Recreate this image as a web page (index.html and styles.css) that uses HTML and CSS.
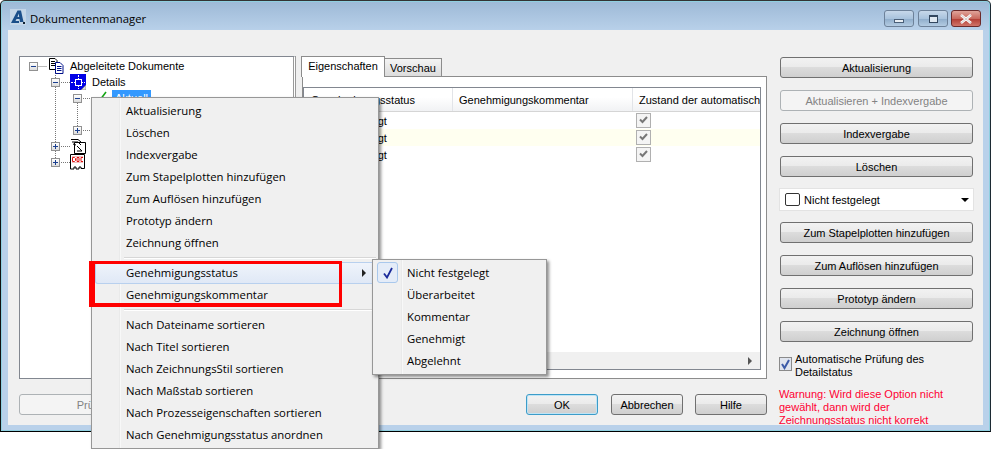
FILE: index.html
```html
<!DOCTYPE html>
<html lang="de">
<head>
<meta charset="utf-8">
<title>Dokumentenmanager</title>
<link rel="stylesheet" href="styles.css">
</head>
<body>
<div class="window">
  <header class="titlebar">
    <svg class="app-icon" width="16" height="16" viewBox="0 0 16 16"><rect width="16" height="16" fill="#c4d6e8"/><path d="M1 14 L7.5 1.5 H11 L13.5 13 H10 L9.5 10 H6.5 L5.5 12 L9 12 L9 14 Z M7.5 8 H9.2 L8.7 4.5 Z" fill="#1b4f8a" fill-rule="evenodd"/><rect x="13" y="13" width="2" height="2" fill="#123"/></svg>
    <span class="title">Dokumentenmanager</span>
    <div class="caption">
      <div class="cap cap-min"><i></i></div>
      <div class="cap cap-max"><i></i></div>
      <div class="cap cap-close"><svg width="14" height="10" viewBox="0 0 14 10"><path d="M2 1 L12 9 M12 1 L2 9" stroke="#fff" stroke-width="2.6"/><path d="M2 1 L12 9 M12 1 L2 9" stroke="#6b5a5a" stroke-width=".7" opacity=".45"/></svg></div>
    </div>
  </header>
  <main class="client">
    <section class="left">
      <div class="top">
        <div class="tree">
          <svg class="tree-lines" width="80" height="120"><path d="M18.5 9.5 H27 M35.5 10 V107 M41 25.5 H50 M41 89.5 H50 M41 105.5 H50 M57.5 42 V74 M63 41.5 H72 M63 73.5 H72" stroke="#777" stroke-dasharray="1 1" fill="none"/></svg>
          <div class="row lvl0"><b class="exp minus"></b>
            <svg class="ico" width="16" height="16" viewBox="0 0 16 16"><path d="M1.5 .5 H7 L9 2.5 V11.5 H1.5 Z" fill="#fff" stroke="#000"/><path d="M3 3.5 H7 M3 5.5 H7 M3 7.5 H7" stroke="#000"/><path d="M7.5 4.5 H12 L15 7.5 V15.5 H7.5 Z" fill="#fff" stroke="#00108a"/><path d="M9 8.5 H13.5 M9 10.5 H13.5 M9 12.5 H13.5" stroke="#00108a"/></svg>
            <span class="label">Abgeleitete Dokumente</span></div>
          <div class="row lvl1"><b class="exp minus"></b>
            <svg class="ico" width="16" height="16" viewBox="0 0 16 16"><rect width="16" height="16" fill="#0000e6"/><path d="M1 8.5 H5 M11 8.5 H15 M8.5 1 V5 M8.5 11 V15" stroke="#fff" stroke-dasharray="2 1"/><rect x="5.5" y="5.5" width="6" height="6" fill="none" stroke="#fff"/><path d="M11 16 L16 11 V16 Z" fill="#ddd" stroke="#777" stroke-width=".6"/></svg>
            <span class="label">Details</span></div>
          <div class="row lvl2"><b class="exp minus"></b>
            <svg class="ico-check" width="10" height="10" viewBox="0 0 10 10"><path d="M2 9 L8 1" stroke="#12a512" stroke-width="1.6"/><path d="M1 7 L2.5 9.5" stroke="#111" stroke-width="1.3"/></svg>
            <span class="label sel">Aktuell</span></div>
          <div class="row lvl2 blank"></div>
          <div class="row lvl2"><b class="exp plus"></b></div>
          <div class="row lvl1"><b class="exp plus"></b>
            <svg class="ico" width="16" height="16" viewBox="0 0 16 16"><path d="M4.5 4.5 H15.5 V15.5 H4.5 Z" fill="#fff" stroke="#000"/><path d="M1 1.5 H8 L11 4 M2 4 H8 L11 7 M7 8 L12 13 M7 13 H12 M3 6 L6 7" stroke="#000" fill="none"/></svg>
          </div>
          <div class="row lvl1"><b class="exp plus"></b>
            <svg class="ico" width="16" height="16" viewBox="0 0 16 16"><path d="M.5 .5 H14.5 V14.5 H11 V13 H9 V15 H6 V13 H4 V15 H.5 Z" fill="#fff" stroke="#000"/><path d="M2 2.5 H13 M2 8.5 H13" stroke="#f0c0c0"/><path d="M2.5 3.5 h2 l1 1 v2 l-1 1 h-2 z M7 3.5 h2 v4 h-2 z M13 3.5 h-2 v4 h2" fill="none" stroke="#e01010"/></svg>
          </div>
        </div>
        <div class="tabs">
          <div class="tabstrip">
            <div class="tab active">Eigenschaften</div>
            <div class="tab">Vorschau</div>
          </div>
          <div class="panel">
            <div class="grid">
              <div class="grid-head">
                <div class="col c1">Genehmigungsstatus</div>
                <div class="col c2">Genehmigungskommentar</div>
                <div class="col c3">Zustand der automatischen Prüfung</div>
              </div>
              <div class="grid-row"><div class="col c1">Nicht festgelegt</div><div class="col c2"></div><div class="col c3"><span class="grid-check"><svg width="13" height="13" viewBox="0 0 13 13"><path d="M3 5.5 L5.5 8 L10 3" stroke="#777" stroke-width="2" fill="none"/></svg></span></div></div>
              <div class="grid-row alt"><div class="col c1">Nicht festgelegt</div><div class="col c2"></div><div class="col c3"><span class="grid-check"><svg width="13" height="13" viewBox="0 0 13 13"><path d="M3 5.5 L5.5 8 L10 3" stroke="#777" stroke-width="2" fill="none"/></svg></span></div></div>
              <div class="grid-row"><div class="col c1">Nicht festgelegt</div><div class="col c2"></div><div class="col c3"><span class="grid-check"><svg width="13" height="13" viewBox="0 0 13 13"><path d="M3 5.5 L5.5 8 L10 3" stroke="#777" stroke-width="2" fill="none"/></svg></span></div></div>
              <div class="grid-scroll"><i class="arrow-right"></i></div>
            </div>
          </div>
        </div>
      </div>
      <div class="bottom">
        <button class="btn wide disabled">Prüfen</button>
        <span class="spacer"></span>
        <button class="btn foot default">OK</button>
        <button class="btn foot">Abbrechen</button>
        <button class="btn foot">Hilfe</button>
      </div>
    </section>
    <aside class="side">
      <button class="btn">Aktualisierung</button>
      <button class="btn disabled">Aktualisieren + Indexvergabe</button>
      <button class="btn">Indexvergabe</button>
      <button class="btn">Löschen</button>
      <div class="combo"><span class="swatch"></span><span class="combo-text">Nicht festgelegt</span><i class="arrow-down"></i></div>
      <button class="btn">Zum Stapelplotten hinzufügen</button>
      <button class="btn">Zum Auflösen hinzufügen</button>
      <button class="btn">Prototyp ändern</button>
      <button class="btn">Zeichnung öffnen</button>
      <div class="auto"><span class="auto-box"><svg width="11" height="12" viewBox="0 0 11 12"><path d="M2 6 L4.5 10 L9 2" stroke="#3b5aa8" stroke-width="2" fill="none"/></svg></span><span>Automatische Prüfung des Detailstatus</span></div>
      <p class="warn">Warnung: Wird diese Option nicht gewählt, dann wird der Zeichnungsstatus nicht korrekt</p>
    </aside>
  </main>

  <nav class="menu ctx">
    <div class="item">Aktualisierung</div>
    <div class="item">Löschen</div>
    <div class="item">Indexvergabe</div>
    <div class="item">Zum Stapelplotten hinzufügen</div>
    <div class="item">Zum Auflösen hinzufügen</div>
    <div class="item">Prototyp ändern</div>
    <div class="item">Zeichnung öffnen</div>
    <div class="sep"></div>
    <div class="item hot">Genehmigungsstatus<i class="arrow-right dark"></i></div>
    <div class="item">Genehmigungskommentar</div>
    <div class="sep"></div>
    <div class="item">Nach Dateiname sortieren</div>
    <div class="item">Nach Titel sortieren</div>
    <div class="item">Nach ZeichnungsStil sortieren</div>
    <div class="item">Nach Maßstab sortieren</div>
    <div class="item">Nach Prozesseigenschaften sortieren</div>
    <div class="item">Nach Genehmigungsstatus anordnen</div>
    <div class="redbox"></div>
  </nav>
  <nav class="menu sub">
    <div class="item checked"><span class="tick"><svg width="12" height="12" viewBox="0 0 12 12"><path d="M2 6.5 L5 10.5 L10 1" stroke="#1a2a9a" stroke-width="1.8" fill="none"/></svg></span>Nicht festgelegt</div>
    <div class="item">Überarbeitet</div>
    <div class="item">Kommentar</div>
    <div class="item">Genehmigt</div>
    <div class="item">Abgelehnt</div>
  </nav>
</div>
</body>
</html>
```
FILE: styles.css
```css
* { box-sizing: border-box; }
html, body { margin: 0; height: 449px; overflow: hidden; background: #fff; }
body { font: 11.33px "Open Sans", "Liberation Sans", sans-serif; color: #000; }
.window {
  position: relative; width: 991px; height: 432px;
  display: flex; flex-direction: column;
  padding: 0 7px 6px 7px;
  background: linear-gradient(#9db9d6, #b9d1ea 30px);
  border: 1px solid #1c2a33; border-top-color: #333; border-left-color: #111; border-radius: 5px 5px 0 0;
  border-bottom: 1px solid #000;
  box-shadow: inset 0 0 0 1px #8fd0e0;
}
.titlebar { height: 29px; display: flex; align-items: center; padding-top: 3px; margin-left: 2px; flex: none; }
.app-icon { flex: none; margin-right: 4px; }
.title { color: #000; font-size: 11.33px; padding-top: 2px; }
.caption { margin-left: auto; display: flex; gap: 3px; align-self: flex-start; margin-top: 6px; margin-right: 2px; }
.cap { width: 30px; height: 17px; border: 1px solid #6d8199; border-radius: 3px; display: flex; align-items: center; justify-content: center; background: linear-gradient(#c7d8ea, #a9c3dd 50%, #8eacca 51%, #b3cbe2); }
.cap-max { margin-left: 1px; }
.cap-close { background: linear-gradient(#e0a49a, #c96a5e 50%, #b23b32 51%, #d0756a); border-color: #6c2a2a; }
.cap-min i { width: 10px; height: 4px; background: #e8eef4; border: 1px solid #4a5f78; margin-top: 4px; }
.cap-max i { width: 9px; height: 8px; background: #dfe8f1; border: 1px solid #33475f; border-top-width: 2px; }
.client { flex: 1; min-height: 0; background: #f0f0f0; display: flex; gap: 13px; padding: 26px 10px 0 11px; overflow: hidden; font: 11px "Liberation Sans", Arial, sans-serif; }
.left { width: 748px; flex: none; display: flex; flex-direction: column; }
.top { height: 323px; display: flex; gap: 5px; flex: none; }
.tree { position: relative; width: 277px; flex: none; background: #fff; border: 1px solid #828790; border-right: 3px double #9a9a9a; padding-top: 1px; }
.tree-lines { position: absolute; left: 0; top: 0; }
.row { position: relative; height: 16px; display: flex; align-items: center; }
.lvl0 { padding-left: 9px; } .lvl1 { padding-left: 31px; } .lvl2 { padding-left: 53px; }
.exp { width: 9px; height: 9px; flex: none; border: 1px solid #919191; background: linear-gradient(#fff, #dcdcdc); position: relative; }
.exp::before { content: ""; position: absolute; left: 1px; right: 1px; top: 3px; height: 1px; background: #1a3f8f; }
.plus::after { content: ""; position: absolute; top: 1px; bottom: 1px; left: 3px; width: 1px; background: #1a3f8f; }
.ico { flex: none; margin-left: 10px; }
.ico-check { margin-left: 16px; margin-bottom: 4px; flex: none; }
.label { margin-left: 6px; white-space: nowrap; }
.sel { background: #3399ff; color: #fff; padding: 0 3px; margin-left: 4px; line-height: 16px; }
.tabs { flex: 1; display: flex; flex-direction: column; min-width: 0; }
.tabstrip { height: 20px; display: flex; align-items: flex-end; flex: none; position: relative; z-index: 1; }
.tab { height: 18px; padding: 0 5px; display: flex; align-items: center; border: 1px solid #8c8c8c; border-bottom: 0; border-left: 0; background: linear-gradient(#f4f4f4, #dcdcdc); }
.tab.active { height: 21px; width: 84px; justify-content: center; margin-bottom: -1px; padding: 0 0 2px; border-left: 1px solid #8c8c8c; background: #fff; }
.panel { flex: 1; min-height: 0; border: 1px solid #8c8c8c; background: #fff; margin-left: 1px; padding: 10px 5px 8px 0; }
.grid { height: 100%; border: 1px solid #828790; display: flex; flex-direction: column; overflow: hidden; }
.grid-head { height: 24px; display: flex; flex: none; background: linear-gradient(#fff 40%, #f1f2f4); border-bottom: 1px solid #d5d5d5; }
.grid-row { height: 17px; display: flex; flex: none; }
.alt { background: #fffff0; }
.col { flex: none; white-space: nowrap; overflow: hidden; display: flex; align-items: center; }
.c1 { width: 149px; padding-left: 7px; }
.c2 { width: 180px; padding-left: 6px; }
.c3 { flex: 1; min-width: 0; padding-left: 6px; }
.grid-head .col { border-right: 1px solid #e2e4e8; }
.grid-head .c3 { border-right: 0; }
.grid-check { width: 15px; height: 15px; border: 1px solid #b0b0b0; background: #f4f4f4; margin-left: -3px; display: flex; }
.grid-scroll { margin-top: auto; height: 17px; background: #f0f0f0; display: flex; align-items: center; justify-content: flex-end; padding-right: 8px; flex: none; }
.arrow-right { width: 0; height: 0; border-left: 4px solid #555; border-top: 4px solid transparent; border-bottom: 4px solid transparent; }
.arrow-down { width: 0; height: 0; border-top: 4px solid #000; border-left: 4px solid transparent; border-right: 4px solid transparent; margin-left: auto; margin-right: 4px; }
.bottom { display: flex; margin-top: 15px; }
.spacer { flex: 1; }
.btn { display: block; height: 21px; width: 100%; padding: 0; border: 1px solid #707070; border-radius: 3px; font: inherit; color: #000; background: linear-gradient(#f2f2f2, #ebebeb 45%, #dcdcdc 50%, #cfcfcf); flex: none; }
.btn.disabled { border-color: #adb2b5; background: #f4f4f4; color: #838383; }
.btn.wide { width: 148px; }
.btn.foot { width: 72px; margin-left: 12px; }
.btn.default { border-color: #3c9cc9; box-shadow: inset 0 0 0 1px #bfe4f5; margin-left: 0; margin-right: 1px; }
.side { width: 193px; flex: none; display: flex; flex-direction: column; gap: 12px; padding-top: 1px; }
.combo { height: 23px; margin: -1px -1px; background: #fff; border: 1px solid #e3e3e3; display: flex; align-items: center; padding-left: 5px; flex: none; }
.swatch { width: 15px; height: 13px; border: 1px solid #333; border-radius: 2px; margin-right: 4px; background: #fff; }
.auto { display: flex; line-height: 13px; margin-top: -1px; }
.auto-box { width: 13px; height: 14px; border: 1px solid #8a8a8a; background: #dfe4ee; margin: 4px 3px 0 -1px; flex: none; display: flex; }
.warn { margin: -3px 0 0 -1px; color: #ff0033; line-height: 13px; }
.menu { position: absolute; z-index: 5; background: #f0f0f0; border: 1px solid #979797; padding: 2px; box-shadow: 2px 2px 3px rgba(0,0,0,.45); }
.ctx { left: 90px; top: 96px; width: 288px; background: linear-gradient(90deg, #f0f0f0 27px, #e2e3e3 27px, #fff 29px, #f0f0f0 29px); }
.sub { left: 371px; top: 258px; width: 175px; z-index: 6; background: linear-gradient(90deg, #f0f0f0 28px, #e2e3e3 28px, #fff 30px, #f0f0f0 30px); }
.item { height: 22px; padding: 0 0 2px 32px; display: flex; align-items: center; position: relative; white-space: nowrap; }
.sep { height: 8px; padding-top: 3px; margin-left: 30px; }
.sep::before { content: ""; display: block; border-top: 1px solid #d7d7d7; border-bottom: 1px solid #fff; }
.hot { background: linear-gradient(#f0f4fb, #dfe8f6); box-shadow: inset 0 0 0 1px #b8d0ee; border-radius: 3px; margin-left: 1px; padding-left: 31px; }
.arrow-right.dark { position: absolute; right: 10px; top: 7px; border-left-color: #222; }
.tick { position: absolute; left: 2px; top: 0; width: 21px; height: 21px; border: 1px solid #a9c8ec; border-radius: 3px; background: #e4ecf8; display: flex; align-items: center; justify-content: center; }
.redbox { position: absolute; left: -3px; top: 163px; width: 253px; height: 46px; border: solid #f00; border-width: 3px 3px 4px 6px; pointer-events: none; }
```
